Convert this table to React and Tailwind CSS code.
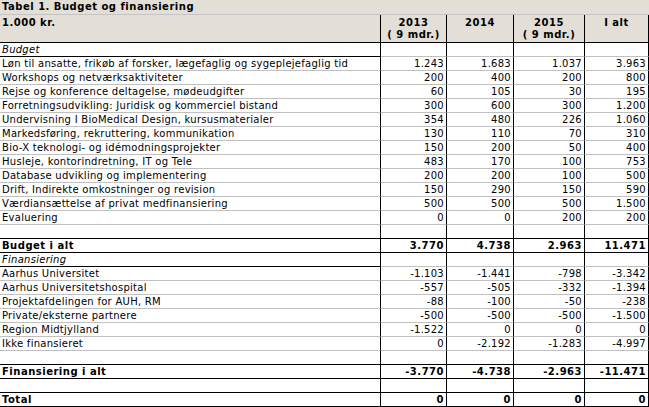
import React from "react";

// tabel-rækker: label, værdier, stil
const rows = [
  { label: "Budget", italic: true, labelBlack: true, vals: ["", "", "", ""] },
  { label: "Løn til ansatte, frikøb af forsker, lægefaglig og sygeplejefaglig tid", vals: ["1.243", "1.683", "1.037", "3.963"] },
  { label: "Workshops og netværksaktiviteter", vals: ["200", "400", "200", "800"] },
  { label: "Rejse og konference deltagelse, mødeudgifter", vals: ["60", "105", "30", "195"] },
  { label: "Forretningsudvikling: Juridisk og kommerciel bistand", vals: ["300", "600", "300", "1.200"] },
  { label: "Undervisning I BioMedical Design, kursusmaterialer", vals: ["354", "480", "226", "1.060"] },
  { label: "Markedsføring, rekruttering, kommunikation", vals: ["130", "110", "70", "310"] },
  { label: "Bio-X teknologi- og idémodningsprojekter", vals: ["150", "200", "50", "400"] },
  { label: "Husleje, kontorindretning, IT og Tele", vals: ["483", "170", "100", "753"] },
  { label: "Database udvikling og implementering", vals: ["200", "200", "100", "500"] },
  { label: "Drift, Indirekte omkostninger og revision", vals: ["150", "290", "150", "590"] },
  { label: "Værdiansættelse af privat medfinansiering", vals: ["500", "500", "500", "1.500"] },
  { label: "Evaluering", vals: ["0", "0", "200", "200"] },
  { label: "", black: true, vals: ["", "", "", ""] },
  { label: "Budget i alt", bold: true, black: true, vals: ["3.770", "4.738", "2.963", "11.471"] },
  { label: "Finansiering", italic: true, labelBlack: true, vals: ["", "", "", ""] },
  { label: "Aarhus Universitet", vals: ["-1.103", "-1.441", "-798", "-3.342"] },
  { label: "Aarhus Universitetshospital", vals: ["-557", "-505", "-332", "-1.394"] },
  { label: "Projektafdelingen for AUH, RM", vals: ["-88", "-100", "-50", "-238"] },
  { label: "Private/eksterne partnere", vals: ["-500", "-500", "-500", "-1.500"] },
  { label: "Region Midtjylland", vals: ["-1.522", "0", "0", "0"] },
  { label: "Ikke finansieret", vals: ["0", "-2.192", "-1.283", "-4.997"] },
  { label: "", black: true, vals: ["", "", "", ""] },
  { label: "Finansiering i alt", bold: true, black: true, vals: ["-3.770", "-4.738", "-2.963", "-11.471"] },
  { label: "", black: true, vals: ["", "", "", ""] },
  { label: "Total", bold: true, black: true, vals: ["0", "0", "0", "0"] },
];

const colW = ["w-[66px]", "w-[67px]", "w-[71px]", "w-[64px]"];

const HeadCell = ({ w, top, sub }) => (
  <div className={`${w} shrink-0 border-r border-black flex flex-col items-center pt-[2px] font-bold tracking-[0.5px] leading-[12px]`}>
    <span>{top}</span>
    {sub && <span>{sub}</span>}
  </div>
);

const App = () => {
  return (
    <div className="w-[649px] h-[407px] bg-white text-black text-[10px] font-['DejaVu_Sans',Verdana,sans-serif] overflow-hidden">
      {/* titel */}
      <div className="h-[15px] bg-[#e3dfd6] border-b border-[#c4c4c4] pl-[2px] font-bold tracking-[0.5px] leading-[14px]">
        Tabel 1. Budget og finansiering
      </div>

      {/* kolonneoverskrifter */}
      <div className="flex h-[28px] bg-[#e3dfd6] border-b border-black">
        <div className="w-[381px] shrink-0 border-r border-black pl-[2px] pt-[2px] font-bold tracking-[0.5px] leading-[12px]">
          1.000 kr.
        </div>
        <HeadCell w={colW[0]} top="2013" sub="( 9 mdr.)" />
        <HeadCell w={colW[1]} top="2014" />
        <HeadCell w={colW[2]} top="2015" sub="( 9 mdr.)" />
        <HeadCell w={colW[3]} top="I alt" />
      </div>

      {rows.map((r, i) => (
        <div
          key={i}
          className={`flex h-[14px] leading-[13px] ${r.bold ? "font-bold tracking-[0.5px]" : "tracking-[0.27px]"}`}
        >
          <div
            className={`w-[381px] shrink-0 border-r border-b border-r-black pl-[2px] whitespace-nowrap overflow-hidden ${
              r.black || r.labelBlack ? "border-b-black" : "border-b-[#c0c0c0]"
            } ${r.italic ? "italic" : ""}`}
          >
            {r.label}
          </div>
          {r.vals.map((v, j) => (
            <div
              key={j}
              className={`${colW[j]} shrink-0 border-r border-b border-r-black text-right pr-[2px] ${
                r.black ? "border-b-black" : "border-b-[#c0c0c0]"
              }`}
            >
              {v}
            </div>
          ))}
        </div>
      ))}
    </div>
  );
};

export default App;
